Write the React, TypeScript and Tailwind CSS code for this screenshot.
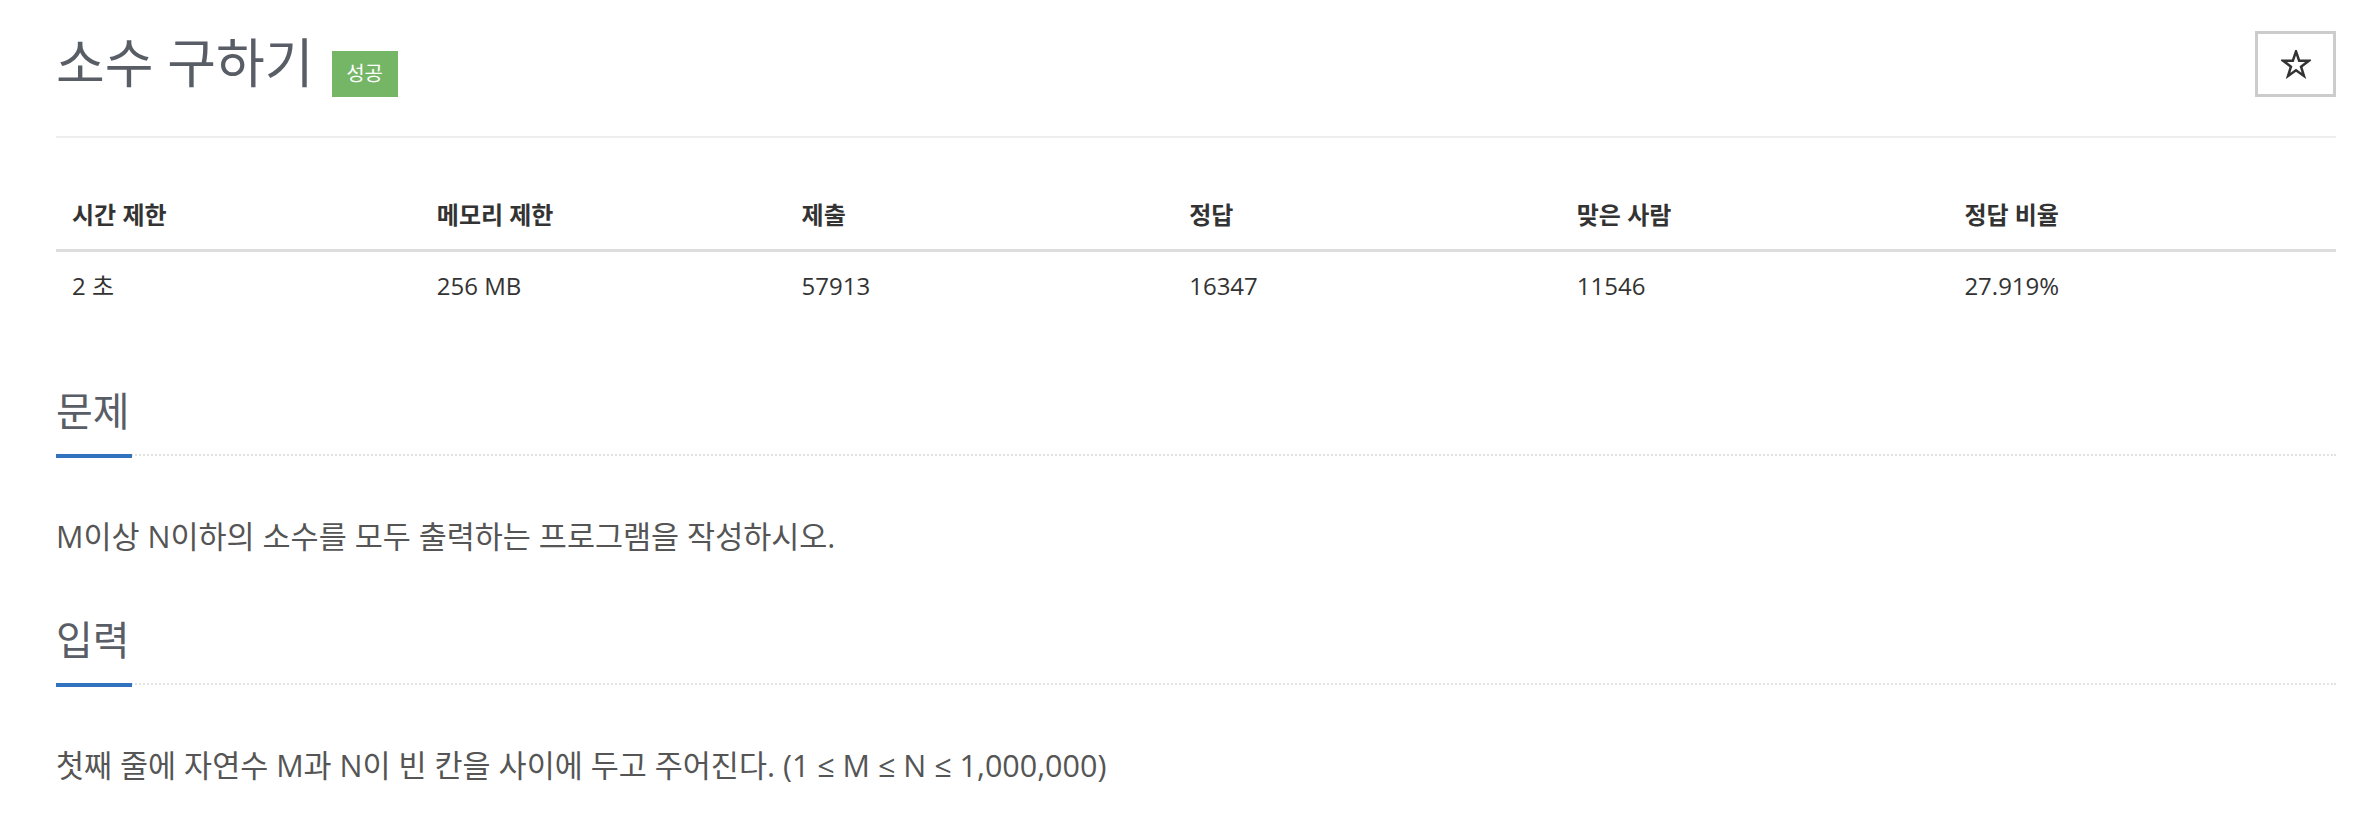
import { FC } from "react"

const font = { fontFamily: '"Open Sans", "Noto Sans CJK KR", sans-serif' }

const cols = [
  { head: "시간 제한", value: "2 초", w: "w-[16%]" },
  { head: "메모리 제한", value: "256 MB", w: "w-[16%]" },
  { head: "제출", value: "57913", w: "w-[17%]" },
  { head: "정답", value: "16347", w: "w-[17%]" },
  { head: "맞은 사람", value: "11546", w: "w-[17%]" },
  { head: "정답 비율", value: "27.919%", w: "w-[17%]" },
]

const StarIcon: FC = () => (
  <svg width="30" height="29" viewBox="-1.5 -1.5 31 30" aria-hidden="true">
    <polygon
      points="14,0 17.23,9.55 27.31,9.67 19.23,15.7 22.23,25.33 14,19.5 5.77,25.33 8.77,15.7 0.69,9.67 10.77,9.55"
      fill="white"
      stroke="#333"
      strokeWidth="2.6"
      strokeLinejoin="miter"
    />
  </svg>
)

const Section: FC<{ title: string; children: React.ReactNode; first?: boolean }> = ({ title, children, first }) => (
  <section className={first ? "mt-[67px]" : "mt-[60px]"}>
    <div className="flex border-b-2 border-dotted border-[#e2e2e2]">
      <h2 className="-mb-[4px] w-[76px] whitespace-nowrap border-b-[4px] border-[#3273bf] pb-[19px] text-[40px] leading-[48px] font-normal text-[#585d66]">
        {title}
      </h2>
    </div>
    <p className="mt-[60px] text-[30.5px] leading-[40px] text-[#555]">{children}</p>
  </section>
)

export default function App() {
  return (
    <div className="min-h-screen bg-white pl-[56px]" style={font}>
      <div className="w-[2280px]">
        <div className="flex h-[138px] justify-between border-b-2 border-[#eee]">
          <div className="mt-[31px] flex items-start">
            <h1 className="text-[53px] leading-[64px] font-normal text-[#585d66]">소수 구하기</h1>
            <span className="ml-[18px] mt-[20px] flex h-[46px] w-[66px] items-center justify-center bg-[#74b566] text-[20px] text-white">
              성공
            </span>
          </div>
          <button className="mt-[31px] flex h-[66px] w-[81px] items-center justify-center border-[3px] border-[#ccc] bg-white">
            <StarIcon />
          </button>
        </div>

        <table className="mt-[43px] w-full border-collapse text-left text-[24px] text-[#333]">
          <thead>
            <tr className="border-b-[3px] border-[#ddd]">
              {cols.map(c => (
                <th key={c.head} className={`${c.w} px-[16px] py-[17px] leading-[34px] font-bold`}>
                  {c.head}
                </th>
              ))}
            </tr>
          </thead>
          <tbody>
            <tr>
              {cols.map(c => (
                <td key={c.head} className="px-[16px] py-[17px] leading-[34px]">
                  {c.value}
                </td>
              ))}
            </tr>
          </tbody>
        </table>

        <Section title="문제" first>
          M이상 N이하의 소수를 모두 출력하는 프로그램을 작성하시오.
        </Section>
        <Section title="입력">
          첫째 줄에 자연수 M과 N이 빈 칸을 사이에 두고 주어진다. (1 ≤ M ≤ N ≤ 1,000,000)
        </Section>
      </div>
    </div>
  )
}
